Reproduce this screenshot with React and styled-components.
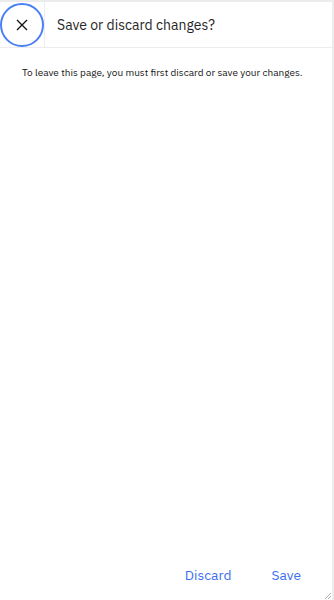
import React from "react";
import styled, { createGlobalStyle } from "styled-components";

const GlobalStyle = createGlobalStyle`
  html, body {
    margin: 0;
    padding: 0;
    background: #fff;
  }
  * {
    box-sizing: border-box;
  }
`;

const Page = styled.div`
  position: relative;
  display: flex;
  flex-direction: column;
  height: 600px;
  border-top: 2px solid #ececec;
  border-right: 2px solid #ececec;
  font-family: "IBM Plex Sans", "Open Sans", "Liberation Sans", sans-serif;
  color: #161616;
`;

const Header = styled.div`
  display: flex;
  align-items: stretch;
  height: 46px;
  border-bottom: 1px solid #ececec;
`;

const CloseButton = styled.button`
  width: 44px;
  height: 44px;
  margin-top: 1px;
  border: 2px solid #4a80f5;
  border-radius: 50%;
  background: #fff;
  display: flex;
  align-items: center;
  justify-content: center;
  padding: 0;
  cursor: pointer;
`;

const Divider = styled.div`
  width: 1px;
  background: #ececec;
`;

const Title = styled.h1`
  margin: 0 0 0 12px;
  display: flex;
  align-items: center;
  font-size: 14px;
  font-weight: 400;
  color: #262626;
`;

const Body = styled.div`
  flex: 1;
  padding: 19px 22px;
`;

const Message = styled.p`
  margin: 0;
  font-size: 10px;
  line-height: 12px;
  color: #161616;
`;

const Footer = styled.div`
  display: flex;
  justify-content: flex-end;
  gap: 40px;
  padding: 0 31px 16px 0;
`;

const ActionButton = styled.button`
  border: none;
  background: none;
  padding: 0;
  line-height: 18px;
  font-family: inherit;
  font-size: 13.8px;
  font-weight: 400;
  color: #3d6ff0;
  cursor: pointer;
`;

const Grip = styled.svg`
  position: absolute;
  right: 0;
  bottom: 0;
`;

const App = () => {
  return (
    <>
      <GlobalStyle />
      <Page>
        <Header>
          <CloseButton aria-label="Close">
            <svg width="12" height="12" viewBox="0 0 12 12">
              <path d="M1 1 L11 11 M11 1 L1 11" stroke="#161616" strokeWidth="1.4" />
            </svg>
          </CloseButton>
          <Divider />
          <Title>Save or discard changes?</Title>
        </Header>
        <Body>
          <Message>To leave this page, you must first discard or save your changes.</Message>
        </Body>
        <Footer>
          <ActionButton>Discard</ActionButton>
          <ActionButton>Save</ActionButton>
        </Footer>
        <Grip width="10" height="10" viewBox="0 0 10 10">
          <path d="M9 3 L3 9 M9 6 L6 9" stroke="#b0b0b0" strokeWidth="1" />
        </Grip>
      </Page>
    </>
  );
};

export default App;
